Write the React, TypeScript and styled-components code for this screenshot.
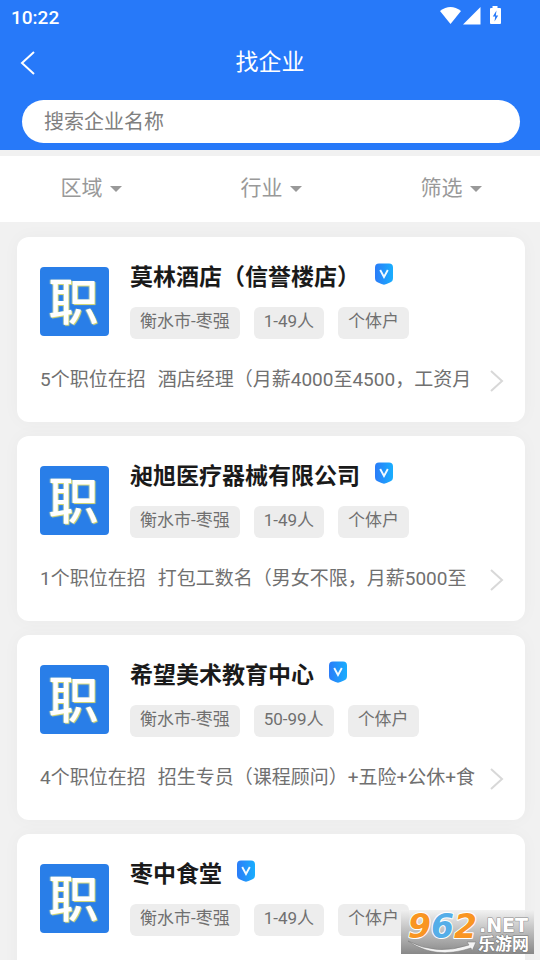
import React from "react";
import styled, { createGlobalStyle } from "styled-components";

const GlobalStyle = createGlobalStyle`
  * { box-sizing: border-box; }
  body {
    margin: 0;
    background: #f1f1f1;
    font-family: Roboto, "Noto Sans CJK SC", sans-serif;
  }
  button, input { font: inherit; border: 0; margin: 0; padding: 0; background: none; }
  h1, h2, p, ul { margin: 0; padding: 0; }
`;

const Screen = styled.div`
  height: 100vh;
  display: flex;
  flex-direction: column;
  overflow: hidden;
`;

const Header = styled.header`
  flex: none;
  background: #2779f9;
  color: #fff;
  padding-bottom: 7px;
`;

const StatusBar = styled.div`
  display: flex;
  justify-content: space-between;
  align-items: center;
  height: 34px;
  padding: 0 38px 0 11px;
  font-size: 19px;
  font-weight: 500;
`;

const StatusIcons = styled.svg`
  display: block;
  width: 62px;
  height: 22px;
`;

const NavBar = styled.div`
  display: grid;
  grid-template-columns: 60px 1fr 60px;
  align-items: center;
  height: 58px;
  margin-bottom: 8px;
`;

const BackButton = styled.button`
  display: flex;
  padding: 4px 20px;
  color: inherit;
  cursor: pointer;
`;

const PageTitle = styled.h1`
  text-align: center;
  font-size: 23px;
  line-height: 58px;
  font-weight: 400;
`;

const SearchField = styled.input`
  display: block;
  width: calc(100% - 42px);
  height: 43px;
  margin: 0 20px 0 22px;
  padding: 0 22px;
  border-radius: 22px;
  background: #fff;
  color: #333;
  font-size: 20px;
  outline: none;
  &::placeholder { color: #808080; opacity: 1; }
`;

const FilterBar = styled.nav`
  flex: none;
  display: grid;
  grid-template-columns: repeat(3, 1fr);
  height: 66px;
  margin-top: 6px;
  background: #fff;
`;

const FilterButton = styled.button`
  display: flex;
  align-items: center;
  justify-content: center;
  gap: 7px;
  padding: 0 0 6px 2px;
  color: #999;
  font-size: 21px;
  cursor: pointer;
`;

const Caret = styled.span`
  margin-top: 6px;
  border: 6px solid transparent;
  border-top-color: #999;
  border-bottom-width: 0;
`;

const CompanyList = styled.ul`
  flex: 1;
  min-height: 0;
  display: flex;
  flex-direction: column;
  gap: 14px;
  padding: 15px 15px 15px 17px;
  overflow-y: auto;
  scrollbar-width: none;
  list-style: none;
`;

const Card = styled.li`
  flex: none;
  padding: 22px 20px 28px 23px;
  border-radius: 12px;
  background: #fff;
  box-shadow: 0 0 18px rgba(0, 0, 0, 0.03);
`;

const Summary = styled.div`
  display: flex;
  gap: 21px;
`;

const Logo = styled.div`
  flex: none;
  width: 69px;
  height: 69px;
  margin-top: 8px;
  border-radius: 4px;
  background: #297ee8;
  color: #fff;
  font-size: 50px;
  line-height: 72px;
  font-weight: 500;
  text-align: center;
  text-indent: -2px;
  text-shadow: 1px 1px 1px #e3df6c, -1px 0 1px #a9c9b8;
`;

const Info = styled.div`
  min-width: 0;
  flex: 1;
`;

const NameRow = styled.div`
  display: flex;
  align-items: center;
  gap: 14px;
  height: 38px;
  margin-bottom: 10px;
`;

const Name = styled.h2`
  color: #1a1a1a;
  font-size: 23px;
  line-height: 38px;
  font-weight: 700;
  white-space: nowrap;
`;

const Badge = styled.svg`
  flex: none;
  width: 20px;
  height: 22px;
  margin-bottom: 8px;
`;

const Tags = styled.div`
  display: flex;
  gap: 14px;
`;

const Tag = styled.span`
  height: 32px;
  padding: 0 10px;
  border-radius: 6px;
  background: #ededed;
  color: #707070;
  font-size: 17px;
  line-height: 28px;
  white-space: nowrap;
`;

const JobsLink = styled.a`
  display: flex;
  align-items: center;
  gap: 12px;
  margin-top: 27px;
  color: #707070;
  font-size: 19px;
  line-height: 28px;
  white-space: nowrap;
  text-decoration: none;
`;

const JobTitle = styled.span`
  flex: 1;
  min-width: 0;
`;

const Arrow = styled.svg`
  flex: none;
  width: 16px;
  height: 24px;
  margin-top: 4px;
`;

const Watermark = styled.div`
  position: absolute;
  right: 6px;
  bottom: 6px;
  width: 133px;
  height: 44px;
  background: linear-gradient(rgba(240, 240, 240, 0.85), rgba(130, 130, 130, 0.95));
`;

const WatermarkArt = styled.svg`
  display: block;
  width: 133px;
  height: 44px;
`;

interface Company {
  name: string;
  tags: string[];
  count: number;
  jobs: string;
}

const companies: Company[] = [
  { name: "莫林酒店（信誉楼店）", tags: ["衡水市-枣强", "1-49人", "个体户"], count: 5, jobs: "酒店经理（月薪4000至4500，工资月" },
  { name: "昶旭医疗器械有限公司", tags: ["衡水市-枣强", "1-49人", "个体户"], count: 1, jobs: "打包工数名（男女不限，月薪5000至" },
  { name: "希望美术教育中心", tags: ["衡水市-枣强", "50-99人", "个体户"], count: 4, jobs: "招生专员（课程顾问）+五险+公休+食" },
  { name: "枣中食堂", tags: ["衡水市-枣强", "1-49人", "个体户"], count: 1, jobs: "" },
];

const filters = ["区域", "行业", "筛选"];

function VerifiedBadge() {
  return (
    <Badge viewBox="0 0 20 22" role="img" aria-label="已认证">
      <defs>
        <linearGradient id="shield" x1="0" y1="0" x2="1" y2="0">
          <stop offset="0" stopColor="#2b7cf8" />
          <stop offset="1" stopColor="#19aefe" />
        </linearGradient>
      </defs>
      <path d="M5 0.5H15Q19 0.5 19 4.500V15Q19 18.500 16 19.500Q12 21.500 10 21.800Q8 21.500 4 19.500Q1 18.500 1 15V4.500Q1 0.500 5 0.500Z" fill="url(#shield)" />
      <path d="M6.200 7L10 14L13.800 7" fill="none" stroke="#f2faff" strokeWidth="1.900" />
    </Badge>
  );
}

function CompanyCard({ company }: { company: Company }) {
  return (
    <Card>
      <Summary>
        <Logo aria-hidden="true">职</Logo>
        <Info>
          <NameRow>
            <Name>{company.name}</Name>
            <VerifiedBadge />
          </NameRow>
          <Tags>
            {company.tags.map((tag) => <Tag key={tag}>{tag}</Tag>)}
          </Tags>
        </Info>
      </Summary>
      <JobsLink href="#jobs">
        <span>{company.count}个职位在招</span>
        <JobTitle>{company.jobs}</JobTitle>
        <Arrow viewBox="0 0 16 24" aria-hidden="true">
          <path d="M2 1L13 11L2 21" fill="none" stroke="#d8d8d8" strokeWidth="2" />
        </Arrow>
      </JobsLink>
    </Card>
  );
}

export default function App() {
  return (
    <Screen>
      <GlobalStyle />
      <Header>
        <StatusBar>
          <span>10:22</span>
          <StatusIcons viewBox="0 0 62 22" fill="#fff" aria-hidden="true">
            <path d="M0 5Q10.500 -3 21 5L10.500 18Z" />
            <path d="M40.500 1V18.500H23Z" />
            <path d="M52.500 0H57.500V2H60Q61 2 61 3V17Q61 18 60 18H51Q50 18 50 17V3Q50 2 51 2H52.500Z" />
            <path d="M56.500 4.500L52.800 10.500H55.200L54.500 15.500L58.200 9.500H55.800Z" fill="#2779f9" />
          </StatusIcons>
        </StatusBar>
        <NavBar>
          <BackButton aria-label="返回">
            <svg width="16" height="26" viewBox="0 0 16 26" aria-hidden="true">
              <path d="M14 2L2 13L14 24" fill="none" stroke="currentColor" strokeWidth="2" />
            </svg>
          </BackButton>
          <PageTitle>找企业</PageTitle>
        </NavBar>
        <SearchField type="search" aria-label="搜索企业名称" placeholder="搜索企业名称" />
      </Header>
      <FilterBar>
        {filters.map((label) => (
          <FilterButton key={label}>
            {label}
            <Caret />
          </FilterButton>
        ))}
      </FilterBar>
      <CompanyList>
        {companies.map((company) => <CompanyCard key={company.name} company={company} />)}
      </CompanyList>
      <Watermark>
        <WatermarkArt viewBox="0 0 133 44">
          <path d="M7 31Q35 46 68 35L66 32L75 32L71 41L70 38Q34 50 7 31Z" fill="#f4f4f4" stroke="#777" strokeWidth="0.500" />
          <g fontFamily="DejaVu Sans" fontWeight="700" paintOrder="stroke" strokeLinejoin="round">
            <text x="7" y="28" fontSize="33" fontStyle="italic" stroke="#fff" strokeWidth="2">
              <tspan fill="#f99522">9</tspan><tspan fill="#55aee8">6</tspan><tspan fill="#f99522">2</tspan>
            </text>
            <text x="78" y="22" fontSize="19" fill="#fff" stroke="#888" strokeWidth="1">.NET</text>
          </g>
          <text x="77" y="40" fontFamily="Noto Sans CJK SC" fontWeight="700" fontSize="17" fill="#fff" stroke="#777" strokeWidth="1" paintOrder="stroke">乐游网</text>
        </WatermarkArt>
      </Watermark>
    </Screen>
  );
}
